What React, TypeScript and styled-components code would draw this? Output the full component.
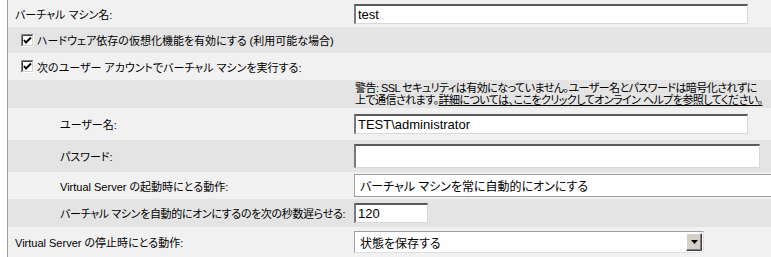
import React from 'react';
import styled, { createGlobalStyle } from 'styled-components';

const GlobalStyle = createGlobalStyle`
  html, body { margin: 0; padding: 0; background: #fff; }
  body {
    font-family: "Liberation Sans", "Noto Sans CJK JP", sans-serif;
    font-size: 11px;
    font-feature-settings: "palt";
    color: #000;
  }
`;

const Panel = styled.div`
  margin-left: 7px;
  border-left: 1px solid #a0a0a0;
  width: 763px;
  overflow: hidden;
`;

const Row = styled.div<{ $h: number; $shade?: boolean }>`
  display: grid;
  grid-template-columns: 346px 1fr;
  align-items: center;
  height: ${(p) => p.$h}px;
  background: ${(p) => (p.$shade ? '#e4e4e4' : '#f1f1f1')};
`;

const CheckRow = styled.div<{ $h: number; $shade?: boolean }>`
  display: flex;
  align-items: center;
  gap: 3px;
  padding-left: 13px;
  height: ${(p) => p.$h}px;
  background: ${(p) => (p.$shade ? '#e4e4e4' : '#f1f1f1')};
`;

const Label = styled.div<{ $indent?: boolean; $tight?: boolean }>`
  padding-left: ${(p) => (p.$indent ? 52 : 7)}px;
  white-space: nowrap;
  letter-spacing: ${(p) => (p.$tight ? '-0.35px' : 'normal')};
`;

const Field = styled.div`
  display: flex;
  align-items: center;
  min-width: 0;
`;

const TextBox = styled.div<{ $w: number; $h?: number }>`
  box-sizing: border-box;
  width: ${(p) => p.$w}px;
  height: ${(p) => p.$h ?? 20}px;
  background: #fff;
  border-style: solid;
  border-width: 2px 1px 1px 2px;
  border-color: #5a5a5a #d8d8d8 #d8d8d8 #7a7a7a;
  padding: 1px 2px 0;
  font-size: 13px;
  line-height: 15px;
  font-feature-settings: normal;
  white-space: nowrap;
  overflow: hidden;
`;

const PlainBox = styled.div`
  box-sizing: border-box;
  width: 430px;
  height: 23px;
  display: flex;
  align-items: center;
  background: #fff;
  border: 1px solid #a0a0a0;
  border-right: none;
  padding-left: 5px;
  font-size: 12px;
  white-space: nowrap;
`;

const Select = styled.div`
  box-sizing: border-box;
  width: 350px;
  height: 22px;
  display: flex;
  align-items: center;
  justify-content: space-between;
  background: #fff;
  border: 1px solid #a0a0a0;
  border-right-color: #e0e0e0;
  border-bottom-color: #e0e0e0;
  padding: 0 1px 0 5px;
  font-size: 12px;
`;

const DropButton = styled.span`
  box-sizing: border-box;
  width: 16px;
  height: 18px;
  display: flex;
  align-items: center;
  justify-content: center;
  background: #d4d0c8;
  border-style: solid;
  border-width: 1px;
  border-color: #fff #404040 #404040 #fff;
  box-shadow: inset -1px -1px 0 #808080;
`;

const Warning = styled.div`
  grid-column: 2;
  padding-left: 1px;
  line-height: 12px;
  white-space: nowrap;
  letter-spacing: -0.55px;

  a {
    color: #000;
    text-decoration: underline;
  }
`;

const CheckIcon = () => (
  <svg width="13" height="13" viewBox="0 0 13 13">
    <rect x="0" y="0" width="13" height="13" fill="#fff" />
    <path d="M0.5 12.5V0.5H12.5" fill="none" stroke="#808080" />
    <path d="M1.5 11.5V1.5H11.5" fill="none" stroke="#404040" />
    <path d="M0.5 12.5H12.5V0.5" fill="none" stroke="#fff" />
    <path d="M1.5 11.5H11.5V1.5" fill="none" stroke="#d4d0c8" />
    <path d="M3 6 L5 8.5 L10 3.5" fill="none" stroke="#000" strokeWidth="2" />
  </svg>
);

const Arrow = () => (
  <svg width="7" height="4" viewBox="0 0 7 4">
    <path d="M0 0H7L3.5 4Z" fill="#000" />
  </svg>
);

export default function App() {
  return (
    <>
      <GlobalStyle />
      <Panel>
        <Row $h={27}>
          <Label>バーチャル マシン名:</Label>
          <Field>
            <TextBox $w={394}>test</TextBox>
          </Field>
        </Row>
        <CheckRow $h={26} $shade>
          <CheckIcon />
          <span>ハードウェア依存の仮想化機能を有効にする (利用可能な場合)</span>
        </CheckRow>
        <CheckRow $h={27}>
          <CheckIcon />
          <span>次のユーザー アカウントでバーチャル マシンを実行する:</span>
        </CheckRow>
        <Row $h={28} $shade>
          <Warning>
            警告: SSL セキュリティは有効になっていません。ユーザー名とパスワードは暗号化されずに
            <br />
            上で通信されます。
            <a href="#help">詳細については、ここをクリックしてオンライン ヘルプを参照してください。</a>
          </Warning>
        </Row>
        <Row $h={32}>
          <Label $indent>ユーザー名:</Label>
          <Field>
            <TextBox $w={394}>TEST\administrator</TextBox>
          </Field>
        </Row>
        <Row $h={32} $shade>
          <Label $indent>パスワード:</Label>
          <Field>
            <TextBox $w={406} $h={24} />
          </Field>
        </Row>
        <Row $h={27}>
          <Label $indent>Virtual Server の起動時にとる動作:</Label>
          <Field>
            <PlainBox>バーチャル マシンを常に自動的にオンにする</PlainBox>
          </Field>
        </Row>
        <Row $h={28} $shade>
          <Label $indent $tight>
            バーチャル マシンを自動的にオンにするのを次の秒数遅らせる:
          </Label>
          <Field>
            <TextBox $w={74}>120</TextBox>
          </Field>
        </Row>
        <Row $h={30}>
          <Label>Virtual Server の停止時にとる動作:</Label>
          <Field>
            <Select>
              <span>状態を保存する</span>
              <DropButton>
                <Arrow />
              </DropButton>
            </Select>
          </Field>
        </Row>
      </Panel>
    </>
  );
}
